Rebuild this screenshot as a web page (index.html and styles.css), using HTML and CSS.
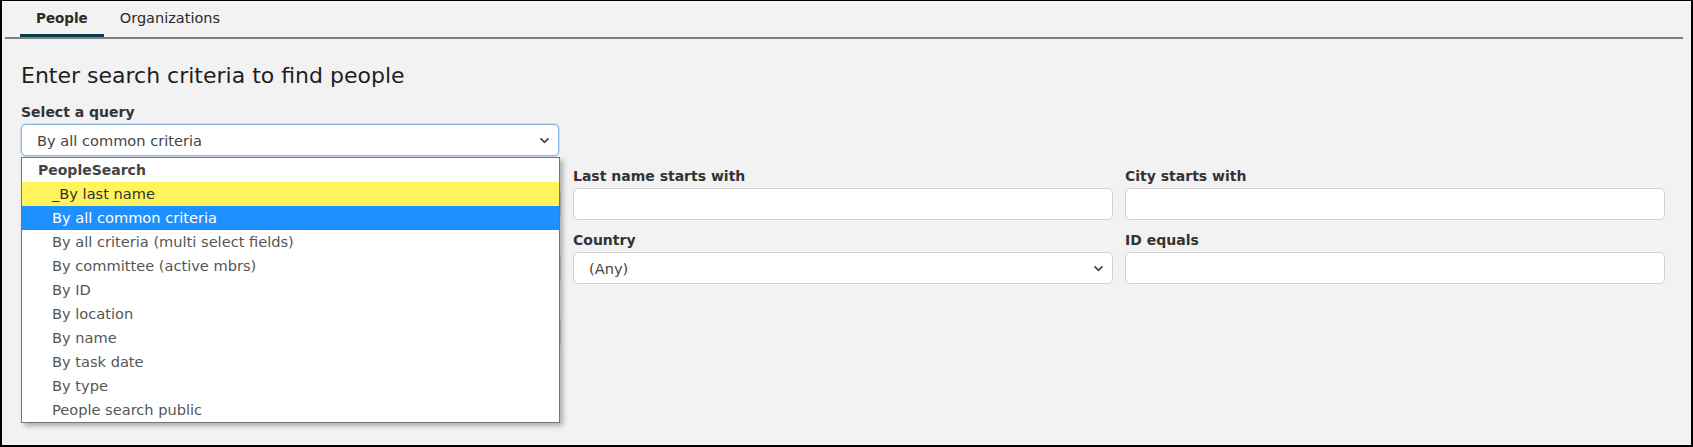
FILE: index.html
```html
<!DOCTYPE html>
<html>
<head>
<meta charset="utf-8">
<link rel="stylesheet" href="styles.css">
</head>
<body>
<div class="page">
  <nav class="tabs">
    <div class="tab active">People</div>
    <div class="tab">Organizations</div>
  </nav>
  <main class="content">
    <h1 class="title">Enter search criteria to find people</h1>
    <div class="query-row">
      <div class="field query-field">
        <label class="label">Select a query</label>
        <div class="select focus">
          <span class="select-text">By all common criteria</span>
          <svg class="chev" viewBox="0 0 12 8" width="11" height="7"><path d="M1.5 1.5 L6 6 L10.5 1.5" fill="none" stroke="#444" stroke-width="2"/></svg>
        </div>
        <div class="dropdown">
          <div class="group">PeopleSearch</div>
          <div class="opt hl">_By last name</div>
          <div class="opt sel">By all common criteria</div>
          <div class="opt">By all criteria (multi select fields)</div>
          <div class="opt">By committee (active mbrs)</div>
          <div class="opt">By ID</div>
          <div class="opt">By location</div>
          <div class="opt">By name</div>
          <div class="opt">By task date</div>
          <div class="opt">By type</div>
          <div class="opt">People search public</div>
        </div>
      </div>
    </div>
    <div class="grid">
      <div class="field">
        <div class="label"></div>
        <div class="input"></div>
      </div>
      <div class="field">
        <label class="label">Last name starts with</label>
        <div class="input"></div>
      </div>
      <div class="field">
        <label class="label">City starts with</label>
        <div class="input"></div>
      </div>
      <div class="field">
        <div class="label"></div>
        <div class="select"></div>
      </div>
      <div class="field">
        <label class="label">Country</label>
        <div class="select">
          <span class="select-text">(Any)</span>
          <svg class="chev" viewBox="0 0 12 8" width="11" height="7"><path d="M1.5 1.5 L6 6 L10.5 1.5" fill="none" stroke="#444" stroke-width="2"/></svg>
        </div>
      </div>
      <div class="field">
        <label class="label">ID equals</label>
        <div class="input"></div>
      </div>
      <div class="field">
        <div class="label"></div>
        <div class="input"></div>
      </div>
    </div>
  </main>
</div>
</body>
</html>
```
FILE: styles.css
```css
* { box-sizing: border-box; }
html, body { margin: 0; padding: 0; }
body {
  font-family: "DejaVu Sans", "Inter", sans-serif;
  color: #333;
}
.page {
  width: 1693px;
  height: 447px;
  background: #f2f2f2;
  border: 2px solid #000;
  border-top-width: 1px;
  overflow: hidden;
}
.tabs {
  display: flex;
  margin: 0 8px 0 3px;
  padding-left: 15px;
  height: 38px;
  border-bottom: 2px solid #808080;
}
.tab {
  padding: 0 16px;
  font-size: 14.5px;
  line-height: 34px;
  height: 36px;
  color: #2a2a2a;
}
.tab.active {
  font-size: 13.5px;
  font-weight: 700;
  border-bottom: 3px solid #083b4c;
}
.content {
  padding: 0 26px 0 19px;
}
.title {
  margin: 21px 0 0 0;
  font-size: 22px;
  line-height: 32px;
  font-weight: 400;
  color: #1e1e1e;
}
.label {
  display: block;
  font-size: 14px;
  font-weight: 700;
  line-height: 20px;
  height: 20px;
  margin-bottom: 2px;
  color: #333;
}
.query-row {
  margin-top: 10px;
  width: 538px;
}
.query-field { position: relative; margin-bottom: 11px; }
.grid {
  display: grid;
  grid-template-columns: repeat(3, 1fr);
  column-gap: 12px;
}
.field { margin-bottom: 10px; }
.input, .select {
  height: 32px;
  background: #fff;
  border: 1px solid #cfcfcf;
  border-radius: 5px;
}
.select {
  display: flex;
  align-items: center;
  justify-content: space-between;
  padding: 0 8px 0 15px;
}
.select.focus {
  border-color: #86b7e6;
  box-shadow: 0 0 0 1px rgba(134, 183, 230, 0.35);
}
.select-text {
  font-size: 14.6px;
  color: #444;
}
.chev { display: block; }
.dropdown {
  position: absolute;
  left: 0;
  top: 55px;
  width: 539px;
  background: #fff;
  border: 1px solid #757575;
  box-shadow: 3px 3px 5px rgba(0, 0, 0, 0.28);
  z-index: 5;
}
.group {
  height: 24px;
  line-height: 24px;
  padding-left: 16px;
  font-size: 14px;
  font-weight: 700;
  color: #444;
}
.opt {
  height: 24px;
  line-height: 24px;
  padding-left: 30px;
  font-size: 14.6px;
  color: #555;
}
.opt.hl { background: #fff45b; color: #333; }
.opt.sel { background: #1e90ff; color: #fff; }
```
